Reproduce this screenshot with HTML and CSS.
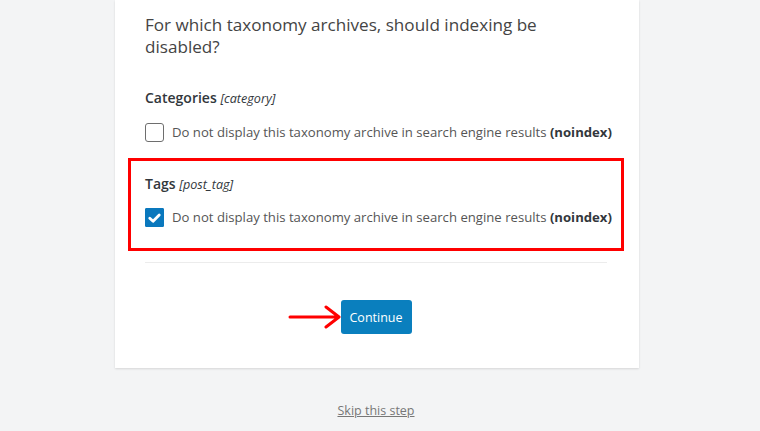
FILE: index.html
```html
<!DOCTYPE html>
<html lang="en">
<head>
<meta charset="utf-8">
<title>Search engine visibility</title>
<link rel="stylesheet" href="styles.css">
</head>
<body>
<div class="card">
  <h2 class="question">For which taxonomy archives, should indexing be disabled?</h2>

  <div class="group">
    <div class="group-label">Categories <em>[category]</em></div>
    <label class="check-row">
      <span class="box"></span>
      <span class="check-text">Do not display this taxonomy archive in search engine results <b>(noindex)</b></span>
    </label>
  </div>

  <div class="group highlight">
    <div class="group-label">Tags <em>[post_tag]</em></div>
    <label class="check-row">
      <span class="box checked"><svg viewBox="0 0 18 18" width="18" height="18"><path d="M4 9.2 L7.5 12.4 L14 5.8" fill="none" stroke="#fff" stroke-width="3" stroke-linecap="round" stroke-linejoin="round"/></svg></span>
      <span class="check-text">Do not display this taxonomy archive in search engine results <b>(noindex)</b></span>
    </label>
  </div>

  <hr class="sep">

  <div class="actions">
    <div class="btn-wrap">
      <svg class="arrow" viewBox="0 0 54 24" width="54" height="24"><path d="M2 12 H50 M38 2 L51 12 L38 22" fill="none" stroke="#f00" stroke-width="3" stroke-linecap="round" stroke-linejoin="round"/></svg>
      <button class="btn">Continue</button>
    </div>
  </div>
</div>
<div class="skip"><a href="#">Skip this step</a></div>
</body>
</html>
```

FILE: styles.css
```css
html, body {
  margin: 0;
  padding: 0;
}
body {
  background: #f3f4f5;
  font-family: "Open Sans", "Noto Sans", sans-serif;
  color: #444;
  height: 431px;
  overflow: hidden;
}
.card {
  margin-left: 115px;
  width: 524px;
  box-sizing: border-box;
  background: #fff;
  box-shadow: 0 1px 2px rgba(0,0,0,0.12);
  padding: 14px 32px 34px 30px;
}
.question {
  margin: 0 0 30px;
  font-size: 17.1px;
  line-height: 22px;
  font-weight: 400;
  color: #444;
}
.group-label {
  font-size: 14px;
  line-height: 20px;
  font-weight: 600;
  color: #32373c;
}
.group-label em {
  font-size: 12.6px;
  font-weight: 400;
  font-style: italic;
  color: #32373c;
}
.check-row {
  display: flex;
  align-items: center;
  gap: 8px;
  margin-top: 14px;
}
.box {
  flex: none;
  width: 19px;
  height: 19px;
  box-sizing: border-box;
  border: 1px solid #6e6e6e;
  border-radius: 3px;
  background: #fff;
  display: flex;
  align-items: center;
  justify-content: center;
}
.box.checked {
  background: #0a78bd;
  border-color: #0a78bd;
  border-radius: 1px;
}
.check-text {
  font-size: 13.15px;
  line-height: 19px;
  color: #555;
  white-space: nowrap;
}
.check-text b {
  font-weight: 700;
  color: #32373c;
}
.group:first-of-type {
  margin-bottom: 16px;
}
.highlight {
  margin: 0 -17px;
  border: 3px solid #f00;
  padding: 13px 14px 21px;
}
.highlight .check-row {
  margin-top: 13px;
}
.sep {
  border: 0;
  border-top: 1px solid #ececec;
  margin: 11px 0 37px;
}
.actions {
  display: flex;
  justify-content: center;
}
.btn-wrap {
  position: relative;
}
.arrow {
  position: absolute;
  left: -53px;
  top: 5px;
}
.btn {
  display: block;
  width: 71px;
  height: 34px;
  background: #0a7fbe;
  color: #fff;
  border: 0;
  border-radius: 3px;
  font-family: inherit;
  font-size: 12.5px;
  padding: 0;
}
.skip {
  text-align: center;
  margin-top: 33px;
  margin-left: -8px;
  font-size: 12.5px;
  line-height: 19px;
}
.skip a {
  color: #777;
  text-decoration: underline;
}
```
